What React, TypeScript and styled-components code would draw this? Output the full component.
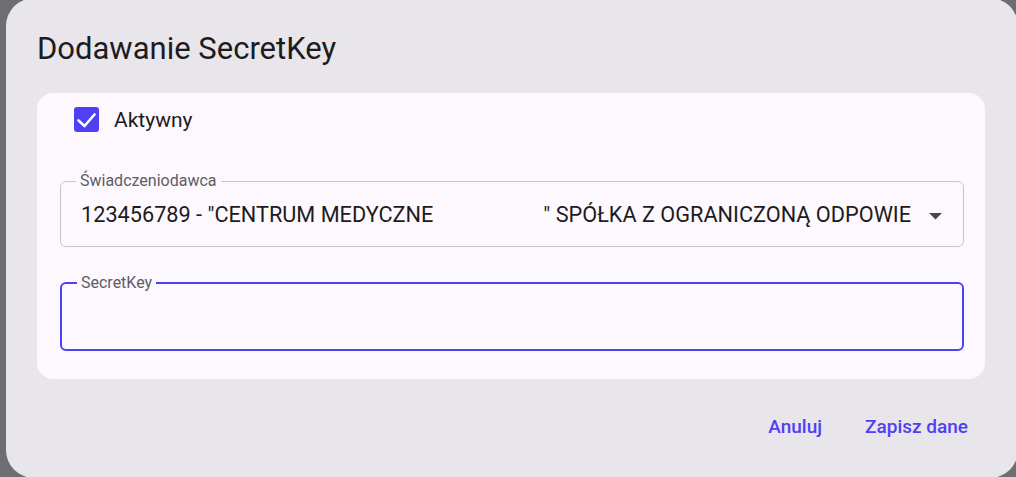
import React from "react";
import styled, { createGlobalStyle } from "styled-components";

const accent = "#5040f4";

const GlobalStyle = createGlobalStyle`
  html, body {
    margin: 0;
    padding: 0;
    background: #6e6d71;
    overflow: hidden;
  }
  * {
    box-sizing: border-box;
  }
`;

const Backdrop = styled.div`
  width: 1016px;
  height: 477px;
  padding-left: 6px;
  display: flex;
  align-items: flex-start;
  overflow: hidden;
  background: #6e6d71;
  font-family: Roboto, "Noto Sans", sans-serif;
`;

const Dialog = styled.div`
  flex: none;
  width: 1012px;
  height: 480px;
  margin-top: -2px;
  padding: 31px 33px 0 31px;
  border-radius: 28px;
  background: #e8e6eb;
  display: flex;
  flex-direction: column;
`;

const Title = styled.h2`
  margin: 0 0 24px 0;
  font-size: 31px;
  line-height: 40px;
  font-weight: 400;
  color: #1d1b20;
`;

const Card = styled.div`
  height: 286px;
  padding: 13px 21px 0 23px;
  border-radius: 16px;
  background: #fcf8fd;
  display: flex;
  flex-direction: column;
`;

const CheckRow = styled.label`
  display: flex;
  align-items: center;
  gap: 15px;
  margin-left: 14px;
  height: 27px;
  font-size: 21px;
  color: #1d1b20;
`;

const CheckBox = styled.span`
  width: 25px;
  height: 25px;
  border-radius: 3px;
  background: ${accent};
  display: flex;
  align-items: center;
  justify-content: center;
`;

const Field = styled.div<{ $focused?: boolean; $top: number; $height: number }>`
  position: relative;
  margin-top: ${(p) => p.$top}px;
  height: ${(p) => p.$height}px;
  width: 904px;
  border-radius: 6px;
  border: ${(p) => (p.$focused ? `2px solid ${accent}` : "1px solid #c7c5ca")};
  display: flex;
  align-items: center;
  padding: 0 ${(p) => (p.$focused ? 19 : 20)}px;
`;

const Legend = styled.span`
  position: absolute;
  top: -11px;
  left: 15px;
  padding: 0 4px;
  background: #fcf8fd;
  font-size: 16px;
  line-height: 20px;
  color: #5e5c64;
`;

const Value = styled.div`
  flex: 1;
  overflow: hidden;
  white-space: nowrap;
  font-size: 21.7px;
  color: #1d1b20;
  margin-right: 9px;
`;

const Blank = styled.span<{ $width: number }>`
  display: inline-block;
  width: ${(p) => p.$width}px;
`;

const Arrow = styled.svg`
  flex: none;
  width: 31px;
  height: 31px;
  margin: 3px -8px 0 0;
  fill: #49454f;
`;

const Footer = styled.div`
  display: flex;
  justify-content: flex-end;
  gap: 23px;
  margin-top: 27px;
  margin-right: 7px;
`;

const TextButton = styled.button`
  border: none;
  background: transparent;
  padding: 0 10px;
  height: 40px;
  font-family: Roboto, "Noto Sans", sans-serif;
  font-size: 19px;
  font-weight: 500;
  color: ${accent};
  cursor: pointer;
`;

export default function App() {
  return (
    <>
      <GlobalStyle />
      <Backdrop>
        <Dialog>
          <Title>Dodawanie SecretKey</Title>
          <Card>
            <CheckRow>
              <CheckBox>
                <svg width="25" height="25" viewBox="0 0 25 25">
                  <polyline
                    points="4.5,13.5 10.5,19 20.5,7.5"
                    fill="none"
                    stroke="#fff"
                    strokeWidth="2.6"
                    strokeLinecap="round"
                    strokeLinejoin="round"
                  />
                </svg>
              </CheckBox>
              Aktywny
            </CheckRow>
            <Field $top={48} $height={66}>
              <Legend>Świadczeniodawca</Legend>
              <Value>
                123456789 - "CENTRUM MEDYCZNE
                <Blank $width={110} />" SPÓŁKA Z OGRANICZONĄ ODPOWIEDZIALNOŚCIĄ
              </Value>
              <Arrow viewBox="0 0 24 24">
                <path d="M7 10l5 5 5-5z" />
              </Arrow>
            </Field>
            <Field $focused $top={35} $height={69}>
              <Legend>SecretKey</Legend>
            </Field>
          </Card>
          <Footer>
            <TextButton>Anuluj</TextButton>
            <TextButton>Zapisz dane</TextButton>
          </Footer>
        </Dialog>
      </Backdrop>
    </>
  );
}
